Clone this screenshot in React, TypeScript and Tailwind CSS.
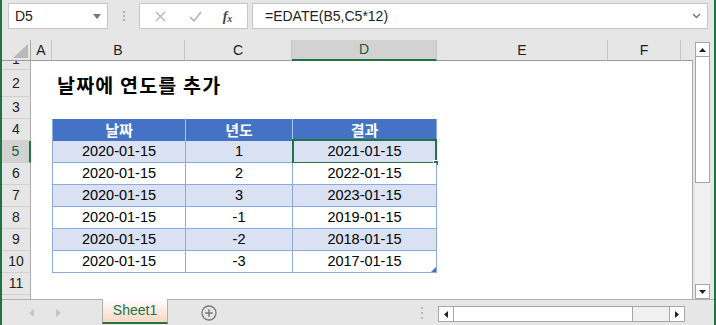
import React from "react";

const FONT = "font-['Liberation_Sans','Noto_Sans_CJK_KR',sans-serif]";
const KFONT = "font-['Noto_Sans_CJK_KR','Liberation_Sans',sans-serif]";

const data = [
  ["2020-01-15", "1", "2021-01-15"],
  ["2020-01-15", "2", "2022-01-15"],
  ["2020-01-15", "3", "2023-01-15"],
  ["2020-01-15", "-1", "2019-01-15"],
  ["2020-01-15", "-2", "2018-01-15"],
  ["2020-01-15", "-3", "2017-01-15"],
];

const colHeaders = ["A", "B", "C", "D", "E", "F", ""];

const RowHeader: React.FC<{ n: number | string; active?: boolean }> = ({ n, active }) => (
  <div
    className={`flex items-center justify-center border-b border-[#d0d0d0] text-[14px] ${
      active
        ? "bg-[#d2d2d2] border-r-2 border-r-[#217346] text-[#185c37]"
        : "bg-[#e6e6e6] border-r border-r-[#ababab] text-[#222]"
    }`}
  >
    {n}
  </div>
);

const Blank: React.FC<{ last?: boolean }> = ({ last }) => (
  <div className={last ? "border-r border-[#ababab]" : ""} />
);

const FormulaBar = () => (
  <div className="h-[40px] flex items-start pt-[3px] pl-[6px] shrink-0">
    <div className="w-[100px] h-[26px] bg-white border border-[#c6c6c6] flex items-center pl-[6px] pr-[6px] text-[14px] text-[#222]">
      <span className="flex-1">D5</span>
      <svg width="8" height="5" viewBox="0 0 8 5">
        <path d="M0 0h8L4 5z" fill="#777" />
      </svg>
    </div>
    <div className="w-[31px] h-[26px] flex items-center justify-center">
      <svg width="2" height="10" viewBox="0 0 2 10">
        <rect x="0" y="0" width="2" height="2" fill="#b0b0b0" />
        <rect x="0" y="4" width="2" height="2" fill="#b0b0b0" />
        <rect x="0" y="8" width="2" height="2" fill="#b0b0b0" />
      </svg>
    </div>
    <div className="w-[109px] h-[26px] bg-white border border-[#c6c6c6] flex items-center">
      <div className="w-[40px] flex justify-center">
        <svg width="11" height="11" viewBox="0 0 11 11">
          <path d="M1 1l9 9M10 1l-9 9" stroke="#b4b4b4" strokeWidth="1.4" />
        </svg>
      </div>
      <div className="w-[30px] flex justify-center">
        <svg width="13" height="11" viewBox="0 0 13 11">
          <path d="M1 6l4 4 7-9" stroke="#b4b4b4" strokeWidth="1.6" fill="none" />
        </svg>
      </div>
      <div className="w-[35px] flex justify-center font-['Liberation_Serif',serif] italic text-[14px] text-[#444] font-bold">
        f<span className="text-[10px] mt-[5px]">x</span>
      </div>
    </div>
    <div className="ml-[4px] w-[456px] h-[26px] bg-white border border-[#c6c6c6] flex items-center pl-[12px] pr-[6px] text-[14px] text-[#222]">
      <span className="flex-1">=EDATE(B5,C5*12)</span>
      <svg width="9" height="6" viewBox="0 0 9 6">
        <path d="M1 1l3.5 3.5L8 1" stroke="#777" strokeWidth="1.5" fill="none" />
      </svg>
    </div>
  </div>
);

const Grid = () => (
  <div className="grid grid-cols-[29px_21px_133px_107px_145px_171px_73px_12px] grid-rows-[21px_9px_27px_repeat(9,22px)_4px] bg-white w-[691px]">
    {/* column header row */}
    <div className="bg-[#e6e6e6] border-r border-[#ababab] border-b border-b-[#9b9b9b] relative">
      <svg className="absolute left-[11px] top-[4px]" width="15" height="14" viewBox="0 0 15 14">
        <path d="M15 0V14H0z" fill="#b9b9b9" />
      </svg>
    </div>
    {colHeaders.map((c, i) =>
      c === "D" ? (
        <div
          key={i}
          className="bg-[#d2d2d2] border-r border-[#c6c6c6] border-b-2 border-b-[#217346] flex items-center justify-center text-[14px] text-[#185c37]"
        >
          {c}
        </div>
      ) : (
        <div
          key={i}
          className={`bg-[#e6e6e6] border-b border-b-[#9b9b9b] flex items-center justify-center text-[14px] text-[#222] ${
            i === 6 ? "" : "border-r border-[#c6c6c6]"
          }`}
        >
          {c}
        </div>
      )
    )}

    {/* row 1, scrolled mostly out of view */}
    <div className="bg-[#e6e6e6] border-r border-[#ababab] border-b border-b-[#d0d0d0] overflow-hidden">
      <div className="h-[22px] mt-[-13px] flex items-center justify-center text-[14px] text-[#222]">1</div>
    </div>
    {colHeaders.map((_, i) => (
      <Blank key={i} last={i === 6} />
    ))}

    {/* row 2 title */}
    <RowHeader n={2} />
    <Blank />
    <div className={`col-span-5 flex items-center pl-[5px] pt-[2px] text-[19.5px] tracking-[1.2px] font-bold text-black ${KFONT}`}>
      날짜에 연도를 추가
    </div>
    <Blank last />

    {/* row 3 */}
    <RowHeader n={3} />
    {colHeaders.map((_, i) => (
      <Blank key={i} last={i === 6} />
    ))}

    {/* row 4 table header */}
    <RowHeader n={4} />
    <Blank />
    {["날짜", "년도", "결과"].map((h, i) => (
      <div
        key={h}
        className={`bg-[#4472c4] flex items-center justify-center text-white font-bold text-[15px] border-[#8ea9db] ${KFONT} ${
          i === 0 ? "border-l" : "border-l border-l-[#b4c6e7]"
        } ${i === 2 ? "border-r" : ""}`}
      >
        {h}
      </div>
    ))}
    <Blank />
    <Blank />
    <Blank last />

    {/* rows 5-10 */}
    {data.map((row, r) => (
      <React.Fragment key={r}>
        <RowHeader n={r + 5} active={r === 0} />
        <Blank />
        {row.map((v, i) => (
          <div
            key={i}
            className={`relative flex items-center justify-center text-[14.5px] text-black border-l border-b border-[#8ea9db] ${
              r % 2 === 0 ? "bg-[#d9e1f2]" : "bg-white"
            } ${i === 2 ? "border-r" : ""}`}
          >
            {v}
            {r === 0 && i === 2 && (
              <div className="absolute left-[-1px] top-[-2px] right-[-1px] bottom-[-2px] border-2 border-[#217346]">
                <div className="absolute right-[-4px] bottom-[-4px] w-[6px] h-[6px] bg-[#217346] border border-white" />
              </div>
            )}
            {r === 5 && i === 2 && (
              <svg className="absolute right-[0px] bottom-[0px]" width="5" height="5" viewBox="0 0 5 5">
                <path d="M5 0V5H0z" fill="#4472c4" />
              </svg>
            )}
          </div>
        ))}
        <Blank />
        <Blank />
        <Blank last />
      </React.Fragment>
    ))}

    {/* row 11 */}
    <RowHeader n={11} />
    {colHeaders.map((_, i) => (
      <Blank key={i} last={i === 6} />
    ))}

    {/* row 12 partial */}
    <div className="bg-[#e6e6e6] border-r border-[#ababab]" />
    {colHeaders.map((_, i) => (
      <Blank key={i} last={i === 6} />
    ))}
  </div>
);

const VScroll = () => (
  <div className="w-[21px] flex flex-col pt-[2px] pl-[2px]">
    <div className="w-[15px] h-[15px] bg-white border border-[#a6a6a6] flex items-center justify-center">
      <svg width="7" height="4" viewBox="0 0 7 4">
        <path d="M0 4L3.5 0L7 4z" fill="#222" />
      </svg>
    </div>
    <div className="w-[15px] h-[126px] bg-white border border-[#a6a6a6] border-t-0" />
    <div className="w-[15px] flex-1 bg-[#f0f0f0]" />
    <div className="w-[15px] h-[15px] bg-white border border-[#a6a6a6] flex items-center justify-center">
      <svg width="7" height="4" viewBox="0 0 7 4">
        <path d="M0 0L3.5 4L7 0z" fill="#222" />
      </svg>
    </div>
  </div>
);

const TabBar = () => (
  <div className="h-[26px] flex items-start border-t border-[#b0b0b0] relative">
    <div className="w-[100px] h-[25px] flex items-center pl-[27px] gap-[22px]">
      <svg width="5" height="8" viewBox="0 0 5 8">
        <path d="M5 0V8L0 4z" fill="#c4c4c4" />
      </svg>
      <svg width="5" height="8" viewBox="0 0 5 8">
        <path d="M0 0V8L5 4z" fill="#c4c4c4" />
      </svg>
    </div>
    <div className="mt-[-1px] w-[66px] h-[25px] border-x border-[#b0b0b0] border-b-2 border-b-[#217346] bg-gradient-to-b from-white to-[#f8d7c3] flex items-center justify-center text-[14px] text-[#217346]">
      Sheet1
    </div>
    <div className="ml-[33px] h-[25px] flex items-center">
      <svg width="16" height="16" viewBox="0 0 16 16">
        <circle cx="8" cy="8" r="7" stroke="#7a7a7a" strokeWidth="1.3" fill="none" />
        <path d="M8 4.2v7.6M4.2 8h7.6" stroke="#7a7a7a" strokeWidth="1.5" />
      </svg>
    </div>
    <div className="ml-[204px] h-[25px] flex items-center">
      <svg width="2" height="12" viewBox="0 0 2 12">
        <rect x="0" y="0" width="2" height="2" fill="#b8b8b8" />
        <rect x="0" y="5" width="2" height="2" fill="#b8b8b8" />
        <rect x="0" y="10" width="2" height="2" fill="#b8b8b8" />
      </svg>
    </div>
    <div className="ml-[15px] mt-[6px] w-[247px] h-[16px] flex bg-[#f0f0f0] border border-[#a6a6a6]">
      <div className="w-[15px] h-full bg-white border-r border-[#a6a6a6] flex items-center justify-center">
        <svg width="4" height="7" viewBox="0 0 4 7">
          <path d="M4 0V7L0 3.5z" fill="#222" />
        </svg>
      </div>
      <div className="w-[179px] h-full bg-white border-r border-[#a6a6a6]" />
      <div className="flex-1" />
      <div className="w-[15px] h-full bg-white border-l border-[#a6a6a6] flex items-center justify-center">
        <svg width="4" height="7" viewBox="0 0 4 7">
          <path d="M0 0V7L4 3.5z" fill="#222" />
        </svg>
      </div>
    </div>
  </div>
);

export default function App() {
  return (
    <div className={`w-[716px] h-[325px] bg-[#e6e6e6] border-x-2 border-[#217346] flex flex-col overflow-hidden ${FONT}`}>
      <FormulaBar />
      <div className="flex h-[259px] shrink-0">
        <Grid />
        <VScroll />
      </div>
      <TabBar />
    </div>
  );
}
